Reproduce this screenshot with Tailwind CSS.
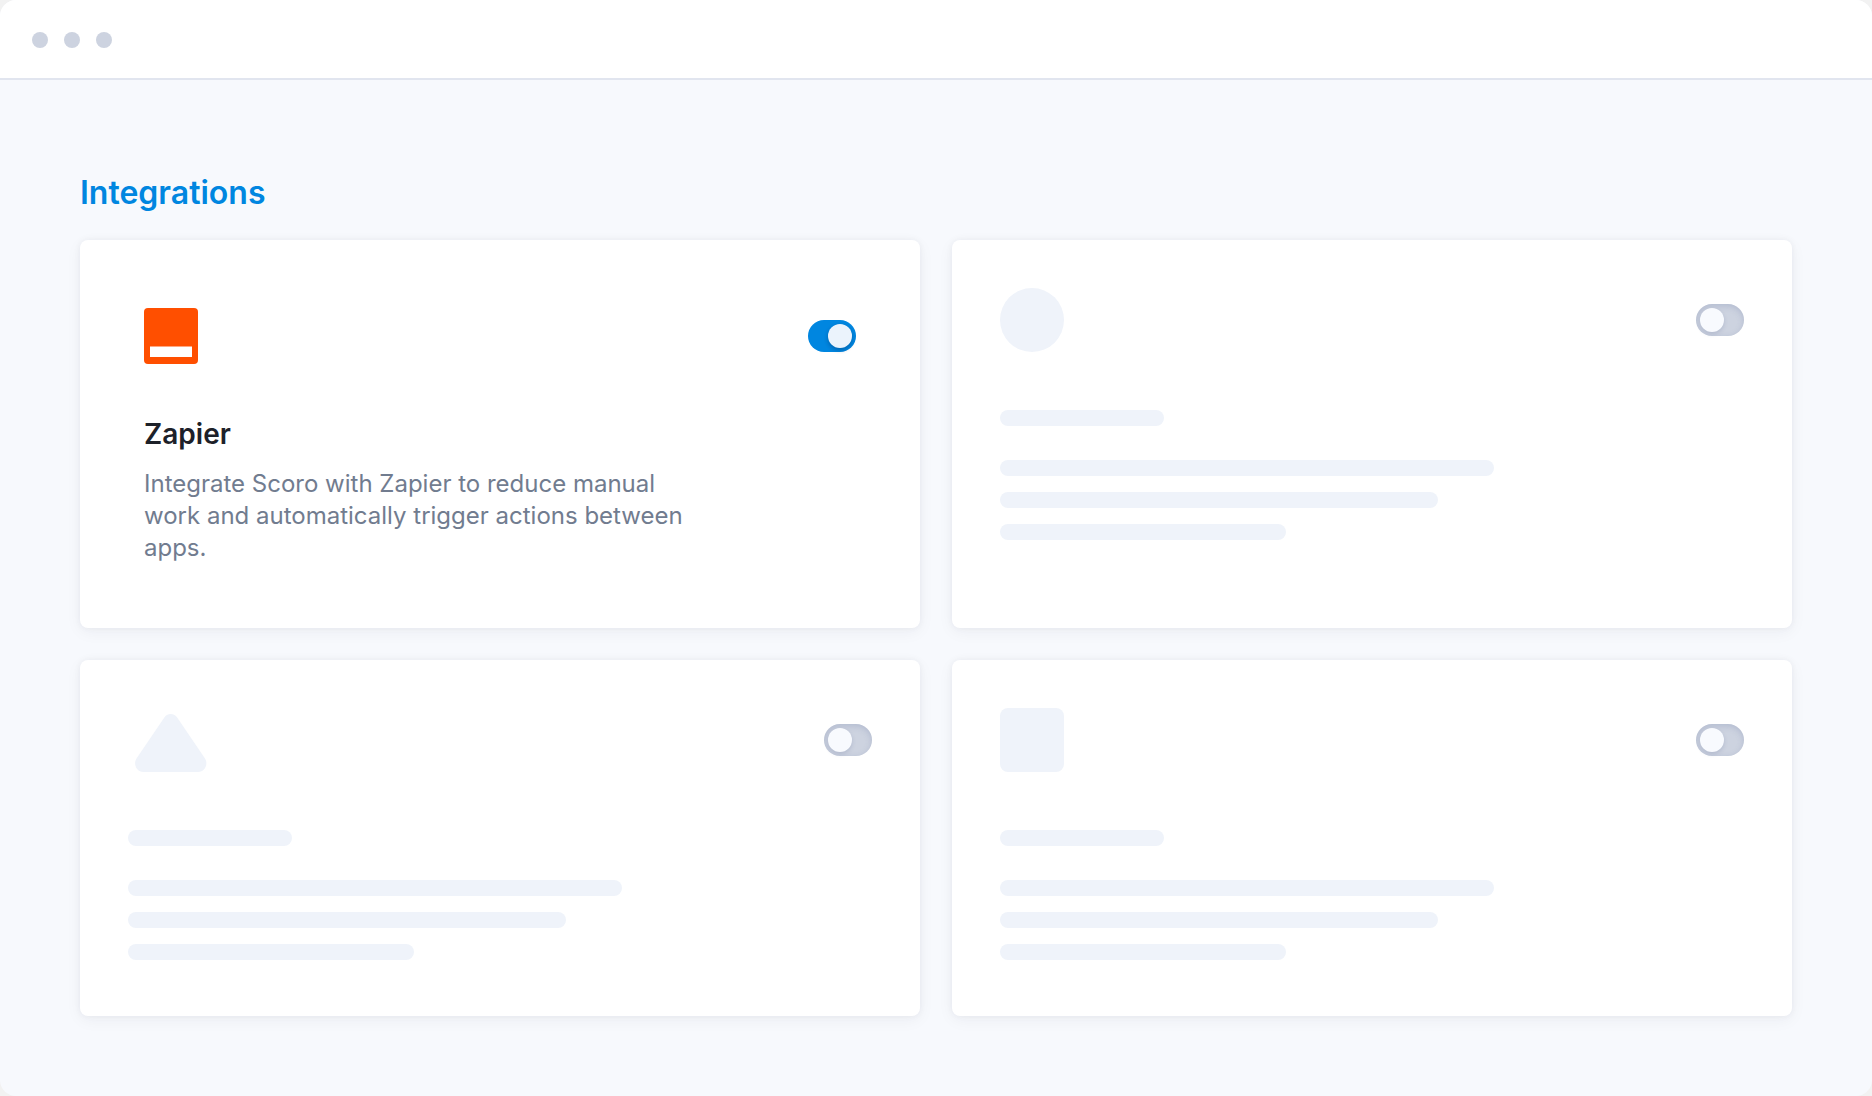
<!DOCTYPE html>
<html lang="en">
<head>
<meta charset="utf-8">
<meta name="viewport" content="width=device-width, initial-scale=1">
<title>Integrations</title>
<script src="https://cdn.jsdelivr.net/npm/@tailwindcss/browser@4"></script>
</head>
<body class="bg-[#f2f2f2] font-[Inter,sans-serif]">
<div class="flex min-h-screen flex-col overflow-hidden rounded-2xl bg-[#f7f9fd]">
  <header class="flex h-20 items-center gap-4 border-b-2 border-[#e1e5ef] bg-white px-8 pt-0.5">
    <span class="size-4 rounded-full bg-[#cdd3e0]"></span>
    <span class="size-4 rounded-full bg-[#cdd3e0]"></span>
    <span class="size-4 rounded-full bg-[#cdd3e0]"></span>
  </header>
  <main class="px-20 pt-[92px] pb-20">
    <h1 class="text-[32px] leading-[42px] font-semibold text-[#0086e0]">Integrations</h1>
    <div class="mt-[26px] grid grid-cols-2 gap-8">

      <section class="rounded-lg bg-white p-16 shadow-[0_4px_16px_rgba(30,35,50,0.05),0_0_6px_rgba(30,35,50,0.05)]">
        <div class="flex h-16 items-center justify-between">
          <svg class="h-14 w-[54px]" viewBox="0 0 54 56" aria-hidden="true"><rect width="54" height="56" rx="4" fill="#ff4f00"/><path d="M6 38.5h42V49H6z" fill="#fff"/></svg>
          <input type="checkbox" checked aria-label="Zapier" class="h-8 w-12 appearance-none rounded-full bg-[#cdd3e0] p-1 before:block before:size-6 before:rounded-full before:bg-[#f8fafe] before:shadow-[0_2px_4px_rgba(20,40,80,0.15)] before:content-[''] checked:bg-[#0086e0] checked:before:translate-x-4 checked:before:bg-[#ebf3fc] checked:before:shadow-[0_2px_4px_rgba(0,20,60,0.3)]">
        </div>
        <h2 class="mt-12 text-[28px] leading-9 font-semibold text-[#1d2129]">Zapier</h2>
        <p class="mt-4 max-w-[560px] text-2xl leading-8 text-[#717c8f]">Integrate Scoro with Zapier to reduce manual work and automatically trigger actions between apps.</p>
      </section>

      <section class="rounded-lg bg-white px-12 pt-12 pb-14 shadow-[0_4px_16px_rgba(30,35,50,0.05),0_0_6px_rgba(30,35,50,0.05)]">
        <div class="flex h-16 items-center justify-between">
          <span class="size-16 rounded-full bg-[#eff3fa]"></span>
          <input type="checkbox" aria-label="Integration 2" class="h-8 w-12 appearance-none rounded-full bg-[#cdd3e0] p-1 shadow-[inset_0_2px_6px_rgba(100,115,160,0.25)] before:block before:size-6 before:rounded-full before:bg-[#f8fafe] before:shadow-[0_2px_4px_rgba(80,95,140,0.2)] before:content-[''] checked:bg-[#0086e0] checked:before:translate-x-4">
        </div>
        <div class="mt-[58px] h-4 w-[164px] rounded-full bg-[#eff3fa]"></div>
        <div class="mt-[34px] flex flex-col gap-4">
          <div class="h-4 w-[494px] rounded-full bg-[#eff3fa]"></div>
          <div class="h-4 w-[438px] rounded-full bg-[#eff3fa]"></div>
          <div class="h-4 w-[286px] rounded-full bg-[#eff3fa]"></div>
        </div>
      </section>

      <section class="rounded-lg bg-white px-12 pt-12 pb-14 shadow-[0_4px_16px_rgba(30,35,50,0.05),0_0_6px_rgba(30,35,50,0.05)]">
        <div class="flex h-16 items-center justify-between">
          <svg class="h-16 w-[86px]" viewBox="0 0 86 64" aria-hidden="true"><path d="M36 10C39 4.700 46.400 4.700 49.500 10L77 50.500C80.500 56 77 64 70 64H15.500C8.500 64 5 56 8.500 50.500Z" fill="#eff3fa"/></svg>
          <input type="checkbox" aria-label="Integration 3" class="h-8 w-12 appearance-none rounded-full bg-[#cdd3e0] p-1 shadow-[inset_0_2px_6px_rgba(100,115,160,0.25)] before:block before:size-6 before:rounded-full before:bg-[#f8fafe] before:shadow-[0_2px_4px_rgba(80,95,140,0.2)] before:content-[''] checked:bg-[#0086e0] checked:before:translate-x-4">
        </div>
        <div class="mt-[58px] h-4 w-[164px] rounded-full bg-[#eff3fa]"></div>
        <div class="mt-[34px] flex flex-col gap-4">
          <div class="h-4 w-[494px] rounded-full bg-[#eff3fa]"></div>
          <div class="h-4 w-[438px] rounded-full bg-[#eff3fa]"></div>
          <div class="h-4 w-[286px] rounded-full bg-[#eff3fa]"></div>
        </div>
      </section>

      <section class="rounded-lg bg-white px-12 pt-12 pb-14 shadow-[0_4px_16px_rgba(30,35,50,0.05),0_0_6px_rgba(30,35,50,0.05)]">
        <div class="flex h-16 items-center justify-between">
          <span class="size-16 rounded-lg bg-[#eff3fa]"></span>
          <input type="checkbox" aria-label="Integration 4" class="h-8 w-12 appearance-none rounded-full bg-[#cdd3e0] p-1 shadow-[inset_0_2px_6px_rgba(100,115,160,0.25)] before:block before:size-6 before:rounded-full before:bg-[#f8fafe] before:shadow-[0_2px_4px_rgba(80,95,140,0.2)] before:content-[''] checked:bg-[#0086e0] checked:before:translate-x-4">
        </div>
        <div class="mt-[58px] h-4 w-[164px] rounded-full bg-[#eff3fa]"></div>
        <div class="mt-[34px] flex flex-col gap-4">
          <div class="h-4 w-[494px] rounded-full bg-[#eff3fa]"></div>
          <div class="h-4 w-[438px] rounded-full bg-[#eff3fa]"></div>
          <div class="h-4 w-[286px] rounded-full bg-[#eff3fa]"></div>
        </div>
      </section>

    </div>
  </main>
</div>
</body>
</html>
